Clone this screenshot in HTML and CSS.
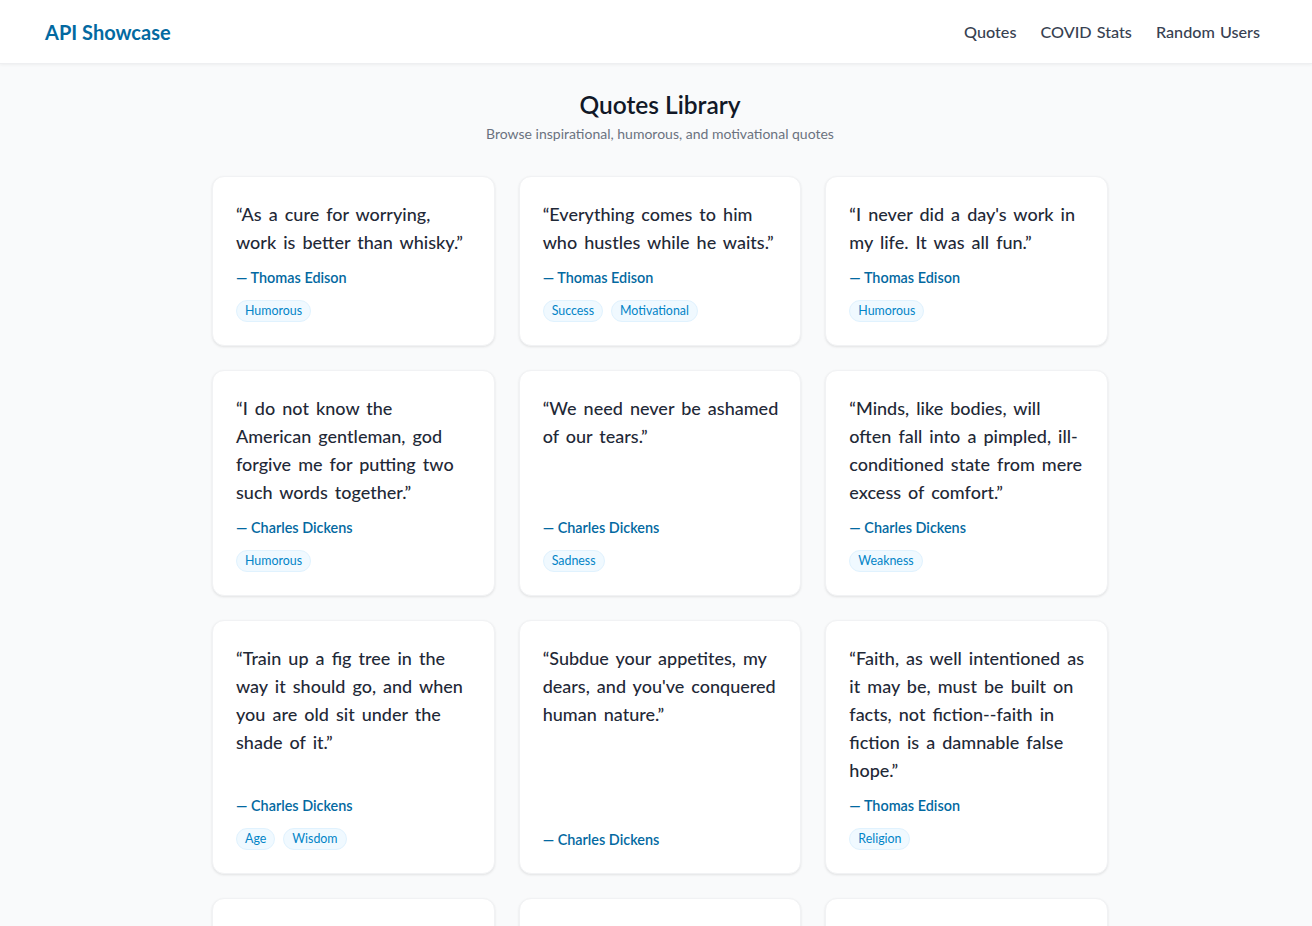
FILE: index.html
```html
<!DOCTYPE html>
<html lang="en">
<head>
<meta charset="utf-8">
<title>API Showcase</title>
<link rel="stylesheet" href="styles.css">
</head>
<body>
<header class="topbar">
  <a class="brand" href="#">API Showcase</a>
  <nav class="nav">
    <a href="#">Quotes</a>
    <a href="#">COVID Stats</a>
    <a href="#">Random Users</a>
  </nav>
</header>
<main class="main">
  <div class="page">
    <div class="intro">
      <h1>Quotes Library</h1>
      <p>Browse inspirational, humorous, and motivational quotes</p>
    </div>
    <section class="grid">
      <article class="card">
        <p class="quote">“As a cure for worrying, work is better than whisky.”</p>
        <p class="author">— Thomas Edison</p>
        <div class="tags"><span class="tag">Humorous</span></div>
      </article>
      <article class="card">
        <p class="quote">“Everything comes to him who hustles while he waits.”</p>
        <p class="author">— Thomas Edison</p>
        <div class="tags"><span class="tag">Success</span><span class="tag">Motivational</span></div>
      </article>
      <article class="card">
        <p class="quote">“I never did a day's work in my life. It was all fun.”</p>
        <p class="author">— Thomas Edison</p>
        <div class="tags"><span class="tag">Humorous</span></div>
      </article>
      <article class="card">
        <p class="quote">“I do not know the American gentleman, god forgive me for putting two such words together.”</p>
        <p class="author">— Charles Dickens</p>
        <div class="tags"><span class="tag">Humorous</span></div>
      </article>
      <article class="card">
        <p class="quote">“We need never be ashamed of our tears.”</p>
        <p class="author">— Charles Dickens</p>
        <div class="tags"><span class="tag">Sadness</span></div>
      </article>
      <article class="card">
        <p class="quote">“Minds, like bodies, will often fall into a pimpled, ill-conditioned state from mere excess of comfort.”</p>
        <p class="author">— Charles Dickens</p>
        <div class="tags"><span class="tag">Weakness</span></div>
      </article>
      <article class="card">
        <p class="quote">“Train up a fig tree in the way it should go, and when you are old sit under the shade of it.”</p>
        <p class="author">— Charles Dickens</p>
        <div class="tags"><span class="tag">Age</span><span class="tag">Wisdom</span></div>
      </article>
      <article class="card">
        <p class="quote">“Subdue your appetites, my dears, and you've conquered human nature.”</p>
        <p class="author">— Charles Dickens</p>
      </article>
      <article class="card">
        <p class="quote">“Faith, as well intentioned as it may be, must be built on facts, not fiction--faith in fiction is a damnable false hope.”</p>
        <p class="author">— Thomas Edison</p>
        <div class="tags"><span class="tag">Religion</span></div>
      </article>
      <article class="card">
        <p class="quote">“The best way to predict the future is to create it.”</p>
        <p class="author">— Thomas Edison</p>
        <div class="tags"><span class="tag">Success</span></div>
      </article>
      <article class="card">
        <p class="quote">“It was the best of times, it was the worst of times.”</p>
        <p class="author">— Charles Dickens</p>
        <div class="tags"><span class="tag">Wisdom</span></div>
      </article>
      <article class="card">
        <p class="quote">“Genius is one percent inspiration and ninety-nine percent perspiration.”</p>
        <p class="author">— Thomas Edison</p>
        <div class="tags"><span class="tag">Motivational</span></div>
      </article>
    </section>
  </div>
</main>
</body>
</html>
```
FILE: styles.css
```css
* { box-sizing: border-box; }
html, body { margin: 0; padding: 0; }
body {
  background: #f9fafb;
  font-family: "Lato", "Open Sans", sans-serif;
  color: #1f2937;
}
a { text-decoration: none; }
.topbar {
  height: 64px;
  background: #ffffff;
  box-shadow: 0 1px 3px rgba(0,0,0,0.05);
  border-bottom: 1px solid #eeeff1;
  display: flex;
  align-items: center;
  justify-content: space-between;
  padding: 0 52px 0 45px;
}
.brand {
  color: #0369a1;
  font-size: 20px;
  font-weight: 700;
}
.nav { display: flex; gap: 24px; }
.nav a {
  color: #374151;
  font-size: 16.2px;
  font-weight: 500;
  word-spacing: 1px;
}
.main { padding-left: 8px; }
.page {
  max-width: 896px;
  margin: 0 auto;
  padding: 25px 0 0;
}
.intro { text-align: center; margin-bottom: 32px; }
.intro h1 {
  margin: 0;
  font-size: 24.5px;
  line-height: 32px;
  font-weight: 600;
  color: #111827;
}
.intro p {
  margin: 3px 0 0;
  font-size: 14px;
  line-height: 20px;
  color: #6b7280;
}
.grid {
  display: grid;
  grid-template-columns: repeat(3, 1fr);
  gap: 24px;
}
.card {
  background: #ffffff;
  border-radius: 12px;
  border: 1px solid #f1f2f4;
  box-shadow: 0 1px 3px rgba(0,0,0,0.07), 0 1px 2px rgba(0,0,0,0.03);
  padding: 23px 20.8px 23px 23px;
  display: flex;
  flex-direction: column;
}
.quote {
  flex: 1;
  margin: 0 0 12px;
  font-size: 18px;
  line-height: 28px;
  font-weight: 500;
  word-spacing: 2.5px;
  color: #1f2937;
}
.author {
  margin: 0;
  font-size: 14.4px;
  line-height: 20px;
  font-weight: 600;
  color: #0369a1;
}
.tags {
  display: flex;
  gap: 8px;
  margin-top: 12px;
}
.tag {
  font-size: 12.4px;
  line-height: 16px;
  padding: 2px 8px;
  border-radius: 999px;
  background: #f0f9ff;
  border: 1px solid #e0f2fe;
  color: #0284c7;
}
```
